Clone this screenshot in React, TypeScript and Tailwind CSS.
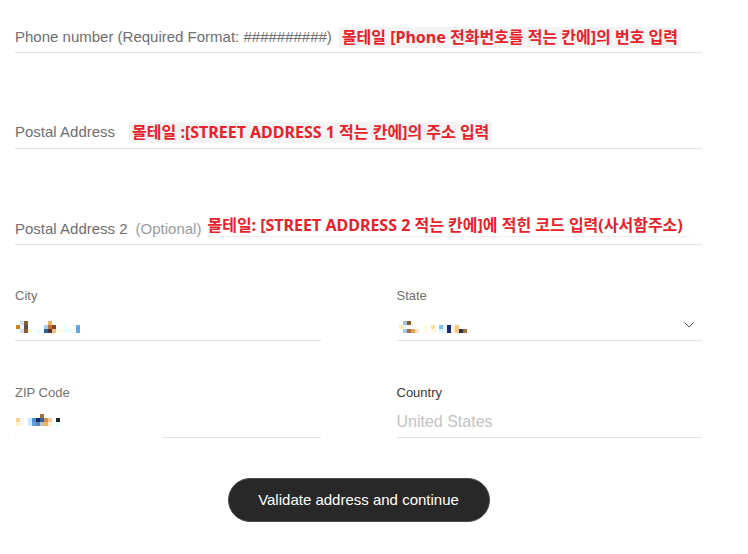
import React from "react";

type Px = [number, number, number, number, string];

const cityPx: Px[] = [
  [4, 0, 4, 4, "#cfe0f0"], [8, 0, 4, 4, "#8b5a2b"], [32, 0, 4, 4, "#e8b060"],
  [0, 4, 4, 4, "#d08020"], [4, 4, 4, 4, "#eef4fa"], [8, 4, 4, 4, "#555555"],
  [28, 4, 4, 4, "#a0d0f0"], [32, 4, 4, 4, "#c07040"], [36, 4, 4, 4, "#904020"],
  [48, 4, 4, 8, "#e8ffff"], [60, 4, 4, 8, "#60a8e0"],
  [4, 8, 4, 4, "#d0e0f0"], [8, 8, 4, 4, "#8b5a2b"], [12, 8, 4, 4, "#fff5d0"],
  [20, 8, 4, 4, "#e8ffff"], [28, 8, 4, 4, "#3060a0"], [32, 8, 4, 4, "#503030"],
  [36, 8, 4, 4, "#f0c080"], [40, 8, 8, 4, "#fffbe8"], [52, 8, 4, 4, "#e8ffff"],
];

const statePx: Px[] = [
  [4, 0, 4, 4, "#a0c0e0"], [8, 0, 4, 4, "#8b5a2b"],
  [0, 4, 4, 4, "#fde8c0"], [4, 4, 4, 4, "#eef4fa"],
  [4, 8, 4, 4, "#a0c8e8"], [8, 8, 4, 4, "#a07040"], [12, 8, 4, 4, "#e0a050"], [16, 8, 4, 4, "#f8e0c8"],
  [24, 4, 4, 8, "#fffbe0"], [32, 4, 4, 4, "#fde0a8"], [32, 8, 4, 4, "#fff5e0"],
  [40, 4, 4, 4, "#80c0f0"], [40, 8, 4, 4, "#d8f4ff"], [44, 4, 4, 8, "#e8f8ff"],
  [48, 4, 4, 8, "#202878"], [52, 4, 4, 8, "#fff0d8"], [56, 4, 4, 8, "#f8c880"],
  [60, 8, 4, 4, "#303050"], [64, 8, 4, 4, "#a07040"],
];

const zipPx: Px[] = [
  [0, 0, 4, 4, "#f8d090"], [0, 4, 4, 4, "#fdf0d0"], [4, 0, 4, 8, "#fff8ee"],
  [12, 0, 4, 4, "#c8e8ff"], [12, 4, 4, 4, "#d0ecff"],
  [16, 0, 4, 4, "#5090d0"], [16, 4, 4, 4, "#60a0e0"],
  [20, 0, 4, 4, "#1a2a6a"], [20, 4, 4, 4, "#5888c0"],
  [24, -4, 4, 4, "#a07040"], [24, 0, 4, 4, "#3060a0"], [24, 4, 4, 4, "#c0c0c0"],
  [28, 0, 4, 4, "#d09050"], [28, 4, 4, 4, "#f0b060"],
  [32, 0, 4, 4, "#f8c890"], [32, 4, 4, 4, "#fff0d0"],
  [40, 0, 4, 4, "#222222"], [40, 4, 4, 4, "#e8ffff"],
];

function Mosaic({ px, w, h }: { px: Px[]; w: number; h: number }) {
  return (
    <svg width={w} height={h} viewBox={`0 -4 ${w} ${h}`} shapeRendering="crispEdges">
      {px.map(([x, y, pw, ph, c], i) => (
        <rect key={i} x={x} y={y} width={pw} height={ph} fill={c} />
      ))}
    </svg>
  );
}

const sans = "font-['Liberation_Sans','Inter',sans-serif]";
const note =
  "font-['Noto_Sans','Noto_Sans_CJK_KR',sans-serif] font-bold text-[16px] leading-[21px] text-[#e8212b]";

export default function App() {
  return (
    <div className={`w-[748px] h-[554px] bg-white ${sans} overflow-hidden`}>
      <div className="pl-[15px] w-[702px]">
        {/* Phone */}
        <div className="h-[53px] flex items-end pb-[4px] border-b border-[#e3e3e3]">
          <div className="flex items-center h-[22px]">
            <span className="text-[15px] text-[#6e6e73]">
              Phone number (Required Format: ##########)
            </span>
            <span className={`${note} ml-[7px] bg-[#f3f3f3] px-[3px]`}>
              몰테일 [Phone 전화번호를 적는 칸에]의 번호 입력
            </span>
          </div>
        </div>

        {/* Postal Address */}
        <div className="h-[96px] flex items-end pb-[5px] border-b border-[#e3e3e3]">
          <div className="flex items-center h-[22px]">
            <span className="text-[15px] text-[#6e6e73]">Postal Address</span>
            <span className={`${note} ml-[14px] bg-[#f3f3f3] px-[3px]`}>
              몰테일 :[STREET ADDRESS 1 적는 칸에]의 주소 입력
            </span>
          </div>
        </div>

        {/* Postal Address 2 */}
        <div className="h-[96px] flex items-end pb-[4px] border-b border-[#e3e3e3]">
          <div className="flex items-center h-[22px]">
            <span className="text-[15px] text-[#6e6e73]">Postal Address 2</span>
            <span className="text-[15px] text-[#9a9ca3] ml-[8px]">(Optional)</span>
            <span className={`${note} ml-[6px] mb-[6px] border-b border-[#eeeeee] pr-[6px]`}>
              몰테일: [STREET ADDRESS 2 적는 칸에]에 적힌 코드 입력(사서함주소)
            </span>
          </div>
        </div>

        {/* City / State */}
        <div className="grid grid-cols-2 gap-x-[76px]">
          <div className="h-[96px] flex flex-col justify-end border-b border-[#e3e3e3] pb-[4px]">
            <div className="text-[13px] leading-[16px] text-[#727272]">City</div>
            <div className="h-[22px] mt-[10px] flex items-center pl-[1px]">
              <Mosaic px={cityPx} w={66} h={16} />
            </div>
          </div>
          <div className="h-[96px] flex flex-col justify-end border-b border-[#e3e3e3] pb-[4px]">
            <div className="text-[13px] leading-[16px] text-[#727272]">State</div>
            <div className="h-[22px] mt-[10px] flex items-center justify-between pr-[8px]">
              <div className="pl-[2px]">
                <Mosaic px={statePx} w={70} h={16} />
              </div>
              <svg width="10" height="6" viewBox="0 0 10 6" fill="none">
                <path d="M0.5 0.5L5 5L9.5 0.5" stroke="#555" strokeWidth="1" />
              </svg>
            </div>
          </div>
        </div>

        {/* ZIP / Country */}
        <div className="grid grid-cols-2 gap-x-[76px]">
          <div className="h-[97px] flex flex-col justify-end">
            <div className="text-[13px] leading-[16px] text-[#727272]">ZIP Code</div>
            <div className="h-[22px] mt-[10px] flex items-center pl-[1px]">
              <Mosaic px={zipPx} w={48} h={16} />
            </div>
            <div className="mt-[4px] flex h-px">
              <div className="w-px bg-[#e3e3e3]" />
              <div className="ml-[146px] flex-1 bg-[#e3e3e3]" />
            </div>
          </div>
          <div className="h-[97px] flex flex-col justify-end border-b border-[#e3e3e3] pb-[4px]">
            <div className="text-[13px] leading-[16px] text-[#3a3a3a]">Country</div>
            <div className="h-[22px] mt-[10px] flex items-center text-[16px] text-[#c2c2c2]">
              United States
            </div>
          </div>
        </div>

        {/* Button */}
        <div className="flex justify-center pt-[40px]">
          <button className="w-[262px] h-[44px] rounded-full bg-[#282828] border border-[#4a4a4a] text-white text-[15px]">
            Validate address and continue
          </button>
        </div>
      </div>
    </div>
  );
}
